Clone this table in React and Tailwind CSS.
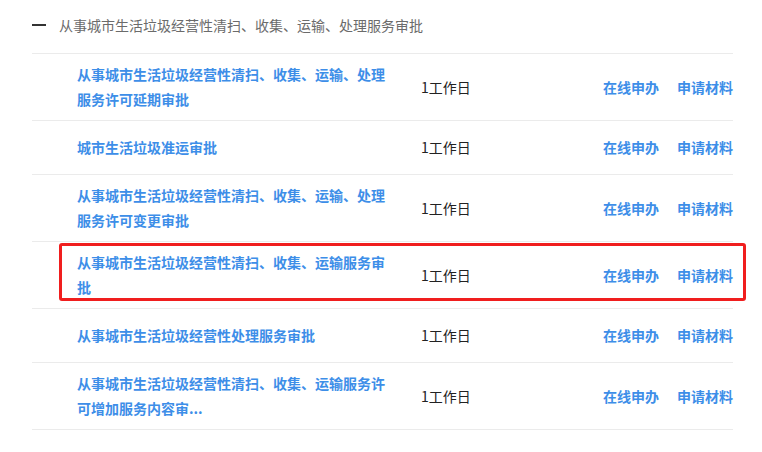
export default function App() {
  const rows = [
    { name: "从事城市生活垃圾经营性清扫、收集、运输、处理服务许可延期审批" },
    { name: "城市生活垃圾准运审批" },
    { name: "从事城市生活垃圾经营性清扫、收集、运输、处理服务许可变更审批" },
    { name: "从事城市生活垃圾经营性清扫、收集、运输服务审批", highlight: true },
    { name: "从事城市生活垃圾经营性处理服务审批" },
    { name: "从事城市生活垃圾经营性清扫、收集、运输服务许可增加服务内容审..." },
  ];
  return (
    <div
      className="w-[762px] h-[452px] bg-white overflow-hidden"
      style={{ fontFamily: '"Noto Sans CJK SC", "Noto Sans", sans-serif' }}
    >
      <div className="ml-[32px] w-[701px]">
        <div className="h-[54px] flex items-center border-b border-[#ebebeb]">
          <div className="w-[14px] h-[2px] bg-[#333] mt-[-4px]" />
          <div className="ml-[13px] text-[14px] leading-[25px] text-[#6b6b6b] mt-[-2px]">
            从事城市生活垃圾经营性清扫、收集、运输、处理服务审批
          </div>
        </div>
        {rows.map((r, i) => (
          <div
            key={i}
            className="relative min-h-[54px] py-[8px] flex items-center border-b border-[#ebebeb]"
          >
            <div className="ml-[45px] w-[310px] text-[14px] leading-[25px] font-bold text-[#3d8ee8]">
              {r.name}
            </div>
            <div className="ml-[34px] text-[14px] text-[#222]">1工作日</div>
            <div className="flex-1 flex justify-end gap-[18px] text-[14px] font-bold text-[#3d8ee8]">
              <span>在线申办</span>
              <span>申请材料</span>
            </div>
            {r.highlight && (
              <div className="absolute left-[27px] right-[-13px] top-[1px] h-[58px] border-[3px] border-[#f01e1e] rounded-[3px]" />
            )}
          </div>
        ))}
      </div>
    </div>
  );
}
